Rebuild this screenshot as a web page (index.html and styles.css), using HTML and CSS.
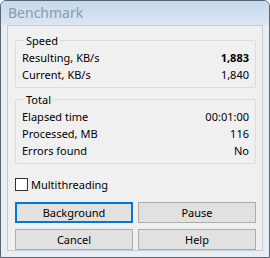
FILE: index.html
```html
<!DOCTYPE html>
<html lang="en">
<head>
  <meta charset="UTF-8">
  <title>Benchmark</title>
  <link rel="stylesheet" href="styles.css">
</head>
<body>
  <div class="window">
    <div class="titlebar">Benchmark</div>
    <div class="client">
      <fieldset class="group">
        <legend>Speed</legend>
        <div class="row"><span>Resulting, KB/s</span><b>1,883</b></div>
        <div class="row"><span>Current, KB/s</span><span>1,840</span></div>
      </fieldset>

      <fieldset class="group">
        <legend>Total</legend>
        <div class="row"><span>Elapsed time</span><span>00:01:00</span></div>
        <div class="row"><span>Processed, MB</span><span>116</span></div>
        <div class="row"><span>Errors found</span><span>No</span></div>
      </fieldset>

      <label class="check"><span class="box"></span>Multithreading</label>

      <div class="buttons">
        <button class="btn default">Background</button>
        <button class="btn">Pause</button>
        <button class="btn">Cancel</button>
        <button class="btn">Help</button>
      </div>
    </div>
  </div>
</body>
</html>
```

FILE: styles.css
```css
body {
  margin: 0;
  font-family: 'Noto Sans', 'DejaVu Sans', sans-serif;
  font-size: 11px;
  color: #000;
  background: #fff;
}

.window {
  width: 268px;
  height: 256px;
  border: 1px solid #5a6470;
  border-radius: 6px 6px 0 0;
  background: #e9eef4;
  display: flex;
  flex-direction: column;
}

.titlebar {
  height: 24px;
  line-height: 24px;
  padding-left: 7px;
  font-size: 14px;
  color: #8d9aa7;
  border-radius: 5px 5px 0 0;
  background: linear-gradient(#c6d9ee, #dae6f3);
}

.client {
  margin: 0 6px 6px 6px;
  flex: 1;
  background: #f0f0f0;
  border: 1px solid #c5ccd4;
  padding: 7px 6px 0 7px;
}

.group {
  margin: 0 0 4px 0;
  padding: 1px 6px 4px 6px;
  border: 1px solid #dcdcdc;
  border-radius: 2px;
}

.group legend {
  padding: 0 2px;
  margin-left: 2px;
}

.row {
  display: flex;
  justify-content: space-between;
  height: 17px;
  line-height: 17px;
}

.check {
  display: flex;
  align-items: center;
  height: 18px;
  margin: 11px 0 9px 0;
}

.box {
  width: 11px;
  height: 11px;
  border: 1px solid #333;
  background: #fff;
  margin-right: 3px;
}

.buttons {
  display: grid;
  grid-template-columns: 1fr 1fr;
  column-gap: 5px;
  row-gap: 6px;
}

.btn {
  height: 21px;
  font-family: inherit;
  font-size: 11px;
  background: #e1e1e1;
  border: 1px solid #adadad;
  padding: 0;
}

.btn.default {
  border: 2px solid #0078d7;
}
```
